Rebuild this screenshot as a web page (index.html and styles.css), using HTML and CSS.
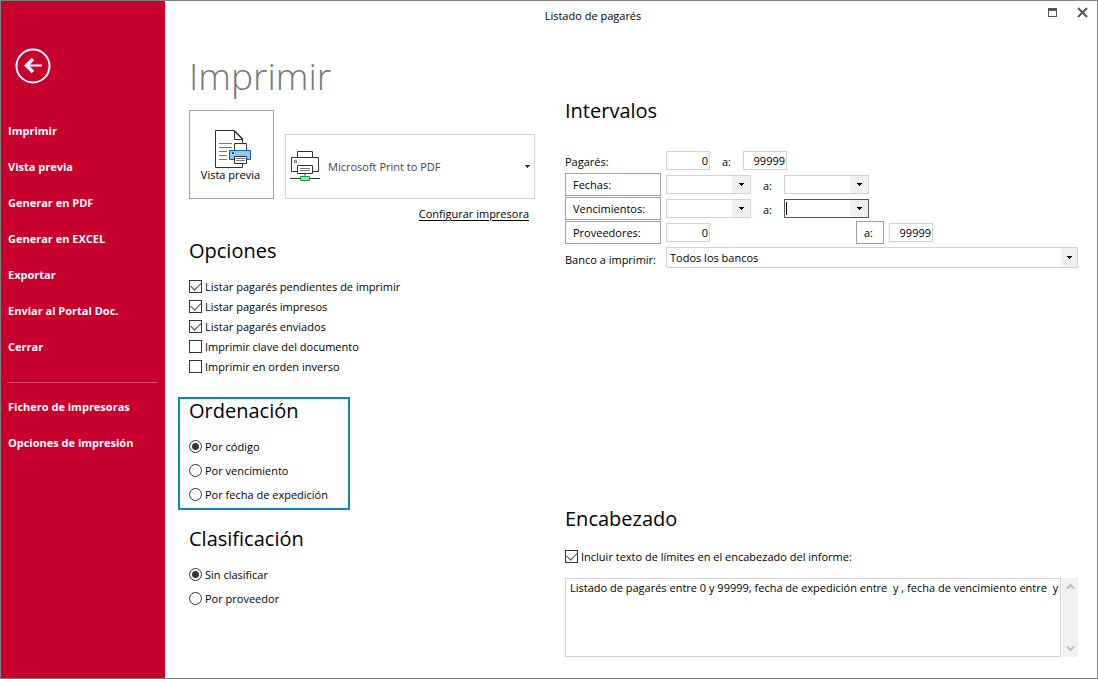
FILE: index.html
```html
<!DOCTYPE html>
<html lang="es">
<head>
<meta charset="utf-8">
<title>Listado de pagarés</title>
<link rel="stylesheet" href="styles.css">
</head>
<body>
<div class="window">
  <aside class="sidebar">
    <button class="back" type="button" aria-label="Volver">
      <svg width="36" height="36" viewBox="0 0 36 36" fill="none" stroke="#fff">
        <circle cx="18" cy="18" r="16.5" stroke-width="2"/>
        <path d="M11 17.500H27" stroke-width="2"/>
        <path d="M18 11L11.500 17.500L18 24" stroke-width="3.500"/>
      </svg>
    </button>
    <nav class="menu">
      <a href="#">Imprimir</a>
      <a href="#">Vista previa</a>
      <a href="#">Generar en PDF</a>
      <a href="#">Generar en EXCEL</a>
      <a href="#">Exportar</a>
      <a href="#">Enviar al Portal Doc.</a>
      <a href="#">Cerrar</a>
    </nav>
    <nav class="menu menu-extra">
      <a href="#">Fichero de impresoras</a>
      <a href="#">Opciones de impresión</a>
    </nav>
  </aside>

  <div class="page">
    <header class="titlebar">
      <span class="title">Listado de pagarés</span>
      <button class="win-btn" type="button" aria-label="Maximizar">
        <svg width="9" height="9" viewBox="0 0 9 9" shape-rendering="crispEdges"><path d="M0.5 0.5h8v8h-8z" fill="#fff" stroke="#555"/><path d="M0 0h9v3H0z" fill="#555"/></svg>
      </button>
      <button class="win-btn" type="button" aria-label="Cerrar">
        <svg width="11" height="11" viewBox="0 0 11 11"><path d="M1 1L10 10M10 1L1 10" stroke="#555" stroke-width="2"/></svg>
      </button>
    </header>

    <main class="content">
      <div class="left">
        <h1>Imprimir</h1>
        <div class="printer-row">
          <button class="preview" type="button">
            <svg width="38" height="38" viewBox="0 0 38 38" fill="none" stroke="#333">
              <path d="M1.500 0.500H20L28.500 9V37.500H1.500z" fill="#fff"/>
              <path d="M20.500 0.500V9.500H28.500" />
              <path d="M20 0.500L28.500 9" stroke-width="1.500"/>
              <path d="M5 13.500H18M5 17.500H18M5 21.500H13M5 25.500H13M5 29.500H13" stroke="#777"/>
              <path d="M20.500 13.500h12v8h-12z" fill="#fff"/>
              <path d="M15.500 20.500h21v9h-21z" fill="#92c7ee" stroke="#0f62b0"/>
              <path d="M18 22h2v2h-2z" fill="#0f62b0" stroke="none"/>
              <path d="M20.500 26.500h12v7h-12z" fill="#fff"/>
              <path d="M22 28.500h9M22 30.500h9" stroke="#777"/>
            </svg>
            <span>Vista previa</span>
          </button>
          <button class="printer" type="button">
            <svg width="30" height="31" viewBox="0 0 30 31" fill="none" stroke="#333">
              <path d="M7.500 7V0.500h15V7"/>
              <path d="M1.500 6.500h27v14h-27z" fill="#fff"/>
              <path d="M4.500 9.500h2v2h-2z" stroke="#777"/>
              <path d="M7.500 14.500h15v8h-15z" fill="#fff"/>
              <path d="M10 17.500h10M10 19.500h10" stroke="#777"/>
              <path d="M15 23v3" stroke="#aaa" stroke-width="2"/>
              <path d="M0 27.500h30"/>
              <path d="M10.500 25.500h9v4h-9z" fill="#a9dfae" stroke="#109a33"/>
            </svg>
            <span>Microsoft Print to PDF</span>
            <svg class="arrow" width="5" height="3" viewBox="0 0 5 3" shape-rendering="crispEdges"><path d="M0 0h5v1H4v1H3v1H2V2H1V1H0z" fill="#333"/></svg>
          </button>
        </div>
        <a class="configure" href="#">Configurar impresora</a>

        <section class="options">
          <h2>Opciones</h2>
          <div class="checks">
            <label><input type="checkbox" checked>Listar pagarés pendientes de imprimir</label>
            <label><input type="checkbox" checked>Listar pagarés impresos</label>
            <label><input type="checkbox" checked>Listar pagarés enviados</label>
            <label><input type="checkbox">Imprimir clave del documento</label>
            <label><input type="checkbox">Imprimir en orden inverso</label>
          </div>
        </section>

        <section class="order">
          <h2>Ordenación</h2>
          <div class="radios">
            <label><input type="radio" name="orden" checked>Por código</label>
            <label><input type="radio" name="orden">Por vencimiento</label>
            <label><input type="radio" name="orden">Por fecha de expedición</label>
          </div>
        </section>

        <section class="classify">
          <h2>Clasificación</h2>
          <div class="radios">
            <label><input type="radio" name="clase" checked>Sin clasificar</label>
            <label><input type="radio" name="clase">Por proveedor</label>
          </div>
        </section>
      </div>

      <div class="right">
        <section>
          <h2>Intervalos</h2>
          <div class="ranges">
            <div class="row">
              <label class="row-label" for="pag1">Pagarés:</label>
              <div class="range">
                <input class="num" id="pag1" type="text" value="0">
                <label class="to" for="pag2">a:</label>
                <input class="num" id="pag2" type="text" value="99999">
              </div>
            </div>
            <div class="row">
              <button class="field-btn" type="button">Fechas:</button>
              <div class="range">
                <div class="combo"><input type="text" aria-label="Fecha inicial"><button type="button" aria-label="Abrir calendario"><svg width="5" height="3" viewBox="0 0 5 3" shape-rendering="crispEdges"><path d="M0 0h5v1H4v1H3v1H2V2H1V1H0z"/></svg></button></div>
                <label class="to" for="fec2">a:</label>
                <div class="combo"><input id="fec2" type="text"><button type="button" aria-label="Abrir calendario"><svg width="5" height="3" viewBox="0 0 5 3" shape-rendering="crispEdges"><path d="M0 0h5v1H4v1H3v1H2V2H1V1H0z"/></svg></button></div>
              </div>
            </div>
            <div class="row">
              <button class="field-btn" type="button">Vencimientos:</button>
              <div class="range">
                <div class="combo"><input type="text" aria-label="Vencimiento inicial"><button type="button" aria-label="Abrir calendario"><svg width="5" height="3" viewBox="0 0 5 3" shape-rendering="crispEdges"><path d="M0 0h5v1H4v1H3v1H2V2H1V1H0z"/></svg></button></div>
                <label class="to" for="ven2">a:</label>
                <div class="combo active"><input id="ven2" type="text"><button type="button" aria-label="Abrir calendario"><svg width="5" height="3" viewBox="0 0 5 3" shape-rendering="crispEdges"><path d="M0 0h5v1H4v1H3v1H2V2H1V1H0z"/></svg></button></div>
              </div>
            </div>
            <div class="row">
              <button class="field-btn" type="button">Proveedores:</button>
              <div class="range">
                <input class="num" type="text" value="0" aria-label="Proveedor inicial">
                <button class="field-btn to-btn" type="button">a:</button>
                <input class="num" type="text" value="99999" aria-label="Proveedor final">
              </div>
            </div>
            <div class="row bank">
              <label class="row-label" for="banco">Banco a imprimir:</label>
              <div class="select">
                <select id="banco"><option>Todos los bancos</option></select>
                <svg width="5" height="3" viewBox="0 0 5 3" shape-rendering="crispEdges"><path d="M0 0h5v1H4v1H3v1H2V2H1V1H0z"/></svg>
              </div>
            </div>
          </div>
        </section>

        <section class="heading">
          <h2>Encabezado</h2>
          <div class="checks">
            <label><input type="checkbox" checked>Incluir texto de límites en el encabezado del informe:</label>
          </div>
          <div class="memo">
            <textarea aria-label="Texto del encabezado">Listado de pagarés entre 0 y 99999, fecha de expedición entre  y , fecha de vencimiento entre  y </textarea>
            <div class="scroll">
              <svg width="9" height="7" viewBox="0 0 9 7" fill="none" stroke="#bdbdbd" stroke-width="2"><path d="M1 5.500L4.500 2L8 5.500"/></svg>
              <svg width="9" height="7" viewBox="0 0 9 7" fill="none" stroke="#bdbdbd" stroke-width="2"><path d="M1 1.500L4.500 5L8 1.500"/></svg>
            </div>
          </div>
        </section>
      </div>
    </main>
  </div>
</div>
</body>
</html>
```
FILE: styles.css
```css
* { box-sizing: border-box; }
body {
  margin: 0;
  font: 11px/16px "Open Sans", "Noto Sans", sans-serif;
  color: #000;
  background: #fff;
}
button, input, select, textarea { font: inherit; color: inherit; margin: 0; }
button { background: #fff; border: 0; padding: 0; }
svg { display: block; flex: none; }
h1, h2 { margin: 0; font-weight: 400; }
h1 { font-size: 37px; line-height: 48px; color: #777; font-weight: 300; }
h2 { font-size: 20px; line-height: 28px; }

.window {
  display: flex;
  min-height: 100vh;
  border: 1px solid #808080;
}
.sidebar {
  flex: none;
  width: 164px;
  padding: 47px 7px 0;
  background: #c8002d;
}
.back { display: block; margin-left: 7px; background: none; }
.menu { display: flex; flex-direction: column; margin-top: 29px; }
.menu a {
  line-height: 36px;
  font-weight: 700;
  color: #fff;
  text-decoration: none;
}
.menu-extra {
  margin: 17px 1px 0 -1px;
  padding: 6px 0 0 1px;
  border-top: 1px solid #d84a68;
}

.page { flex: 1; min-width: 0; }
.titlebar {
  display: flex;
  align-items: center;
  height: 23px;
  padding: 0 9px 0 0;
  gap: 20px;
}
.title { flex: 1; padding: 7px 7px 0 0; text-align: center; }
.win-btn { flex: none; }

.content {
  display: grid;
  grid-template-columns: 346px minmax(0, 1fr);
  gap: 30px;
  padding: 28px 19px 21px 24px;
}
.left { display: flex; flex-direction: column; align-items: flex-start; }
.printer-row {
  display: flex;
  align-items: flex-end;
  gap: 11px;
  width: 100%;
  margin-top: 10px;
}
.preview {
  display: flex;
  flex-direction: column;
  align-items: center;
  width: 85px;
  height: 89px;
  padding: 19px 2px 0 0;
  border: 1px solid #a0a0a0;
}
.preview svg { margin-left: 4px; }
.preview span { line-height: 14px; }
.printer {
  display: flex;
  align-items: center;
  flex: 1;
  height: 65px;
  padding: 0 4px;
  gap: 8px;
  border: 1px solid #d3d3d3;
  color: #444;
}
.arrow { margin-left: auto; }
.configure {
  align-self: flex-end;
  margin: 7px 6px 0 0;
  color: #000;
  text-underline-offset: 2px;
}

.options { margin-top: 15px; }
.checks, .radios { display: flex; flex-direction: column; }
.checks { margin-top: 12px; }
.radios { margin-top: 10px; }
.checks label, .radios label { display: flex; align-items: center; gap: 3px; height: 20px; }
.radios label { height: 24px; }
.checks input, .radios input {
  appearance: none;
  flex: none;
  width: 13px;
  height: 13px;
  margin-bottom: 2px;
  border: 1px solid #333;
  background: #fff;
}
.radios input { border-radius: 50%; }
.radios input:checked { background: radial-gradient(circle, #333 3px, #fff 4px); }
.checks input:checked { display: grid; place-items: center; }
.checks input:checked::before {
  content: "";
  width: 9px;
  height: 5px;
  margin-bottom: 3px;
  border: solid #444;
  border-width: 0 0 1px 1px;
  transform: rotate(-45deg);
}
.order {
  width: 172px;
  margin: 20px 0 0 -11px;
  padding: 0 0 1px 9px;
  border: 2px solid #0a84c4;
}
.order h2 { line-height: 24px; }
.order .radios { margin-top: 12px; }
.classify { margin-top: 15px; }

.right { display: flex; flex-direction: column; padding-top: 45px; }
.ranges { display: flex; flex-direction: column; gap: 1px; margin-top: 24px; }
.row {
  display: grid;
  grid-template-columns: 96px minmax(0, 1fr);
  gap: 5px;
  align-items: start;
  min-height: 23px;
}
.row-label { padding-top: 5px; }
.range { display: flex; align-items: flex-start; max-width: 267px; padding-top: 2px; }
.num {
  width: 44px;
  height: 19px;
  padding: 0 1px;
  border: 1px solid #d3d3d3;
  text-align: right;
}
.to { width: 33px; padding: 3px 0 0 12px; }
.field-btn {
  height: 23px;
  padding: 0 7px;
  border: 1px solid #a0a0a0;
  text-align: left;
}
.to-btn { width: 28px; margin: -2px 5px 0 auto; }
.combo { display: flex; width: 85px; height: 19px; border: 1px solid #d3d3d3; }
.combo input {
  flex: 1;
  min-width: 0;
  padding: 0 2px;
  border: 0;
  background: none;
}
.combo button {
  display: grid;
  place-items: center;
  width: 18px;
  background: #f0f0f0;
}
.active { border-color: #555; }
.active input { background: linear-gradient(#000, #000) 1px 2px / 1px 13px no-repeat; }
.bank { margin-top: 2px; }
.select { display: grid; align-items: center; }
.select select, .select svg { grid-area: 1 / 1; }
.select select {
  appearance: none;
  width: 100%;
  height: 21px;
  padding: 0 20px 0 3px;
  border: 1px solid #d3d3d3;
  border-radius: 0;
  background: linear-gradient(#f0f0f0, #f0f0f0) right / 16px 100% no-repeat #fff;
}
.select svg { justify-self: end; margin-right: 6px; pointer-events: none; }

.heading { margin-top: 235px; }
.heading .checks { margin-top: 14px; }
.memo { display: flex; gap: 1px; height: 79px; margin-top: 11px; }
.memo textarea {
  flex: 1;
  min-width: 0;
  padding: 1px 0 1px 4px;
  border: 1px solid #d3d3d3;
  resize: none;
  overflow: hidden;
}
.scroll {
  display: flex;
  flex-direction: column;
  align-items: center;
  justify-content: space-between;
  width: 16px;
  padding: 5px 0;
  background: #f0f0f0;
}
```
